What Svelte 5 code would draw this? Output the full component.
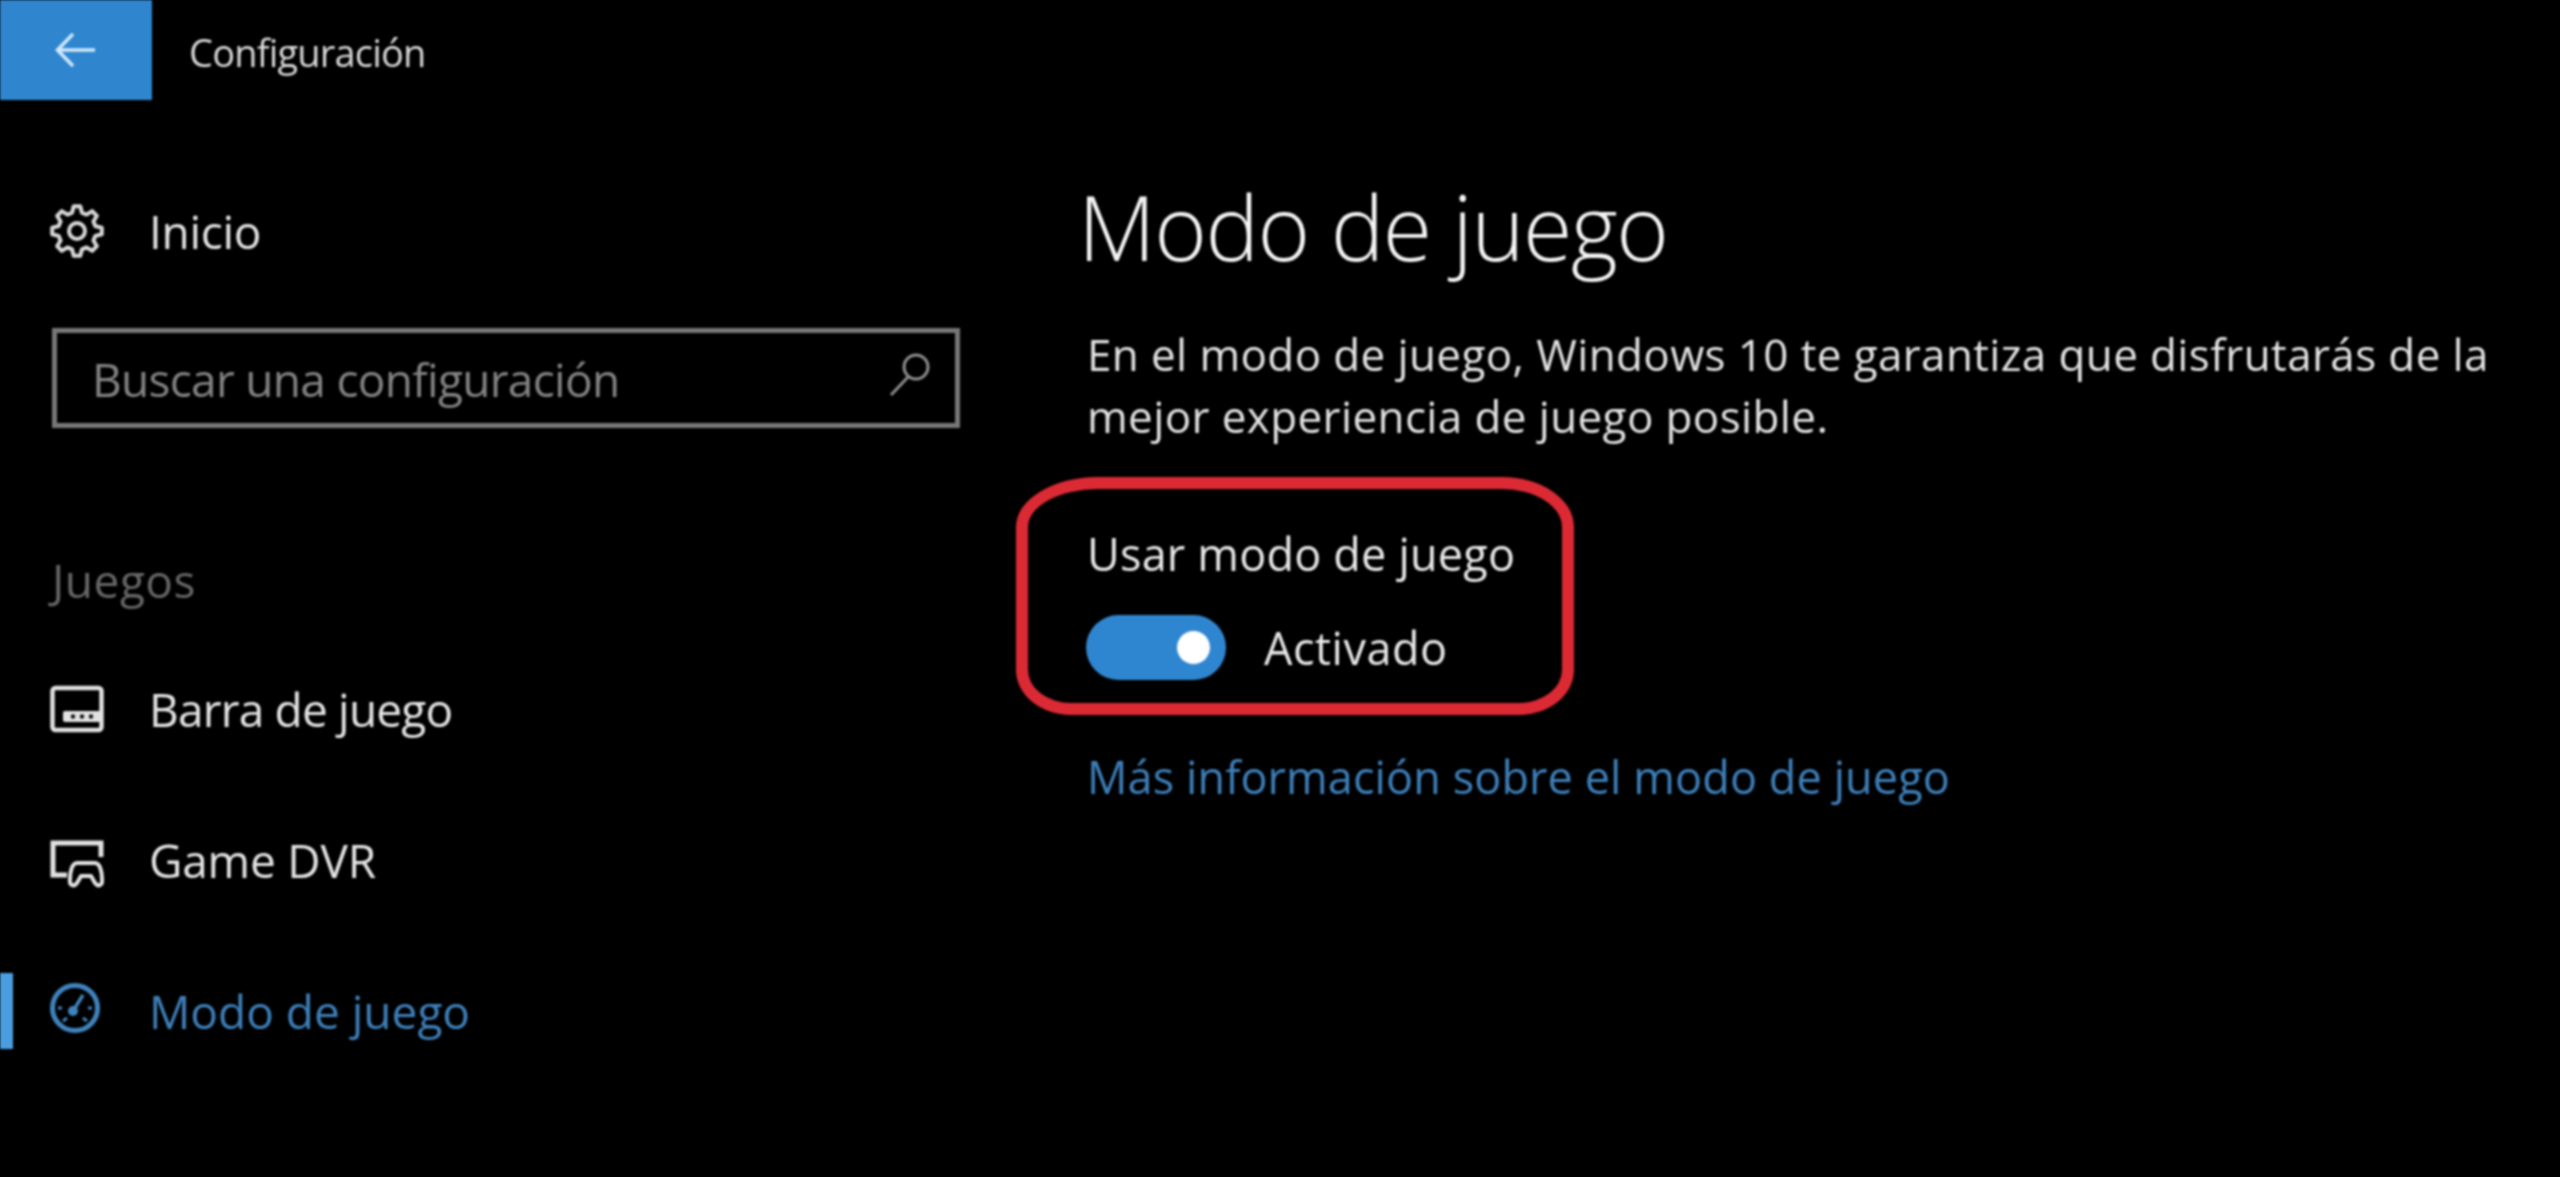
<script>
  // outline of the settings gear, teeth alternate between two radii
  function gearPath(cx, cy, teeth, outer, inner) {
    const pts = [];
    const step = (Math.PI * 2) / teeth;
    for (let i = 0; i < teeth; i++) {
      const a = i * step - Math.PI / 2;
      const w = step * 0.17;
      for (const [r, o] of [[outer, -w], [outer, w], [inner, step / 2 - w], [inner, step / 2 + w]]) {
        pts.push((cx + r * Math.cos(a + o)).toFixed(1) + ' ' + (cy + r * Math.sin(a + o)).toFixed(1));
      }
    }
    return 'M' + pts.join('L') + 'Z';
  }

  const gear = gearPath(27, 27, 8, 25, 19);
</script>

<div class="page">
  <header class="topbar">
    <div class="back">
      <svg width="40" height="36" viewBox="0 0 40 36" fill="none" stroke="#cfe8fb" stroke-width="3.5">
        <path d="M40 18H3M18 2 2.5 18 18 34" />
      </svg>
    </div>
    <span class="app-title">Configuración</span>
  </header>

  <div class="body">
    <aside class="sidebar">
      <div class="row">
        <svg class="icon" viewBox="0 0 54 54" fill="none" stroke="#d8d8d8" stroke-width="4" stroke-linejoin="round">
          <path d={gear} />
          <circle cx="27" cy="27" r="8" />
        </svg>
        <span class="label inicio">Inicio</span>
      </div>

      <div class="search">
        <span class="placeholder">Buscar una configuración</span>
        <svg class="search-icon" viewBox="0 0 42 44" fill="none" stroke="#8c8c8c" stroke-width="3">
          <circle cx="27" cy="15" r="12" />
          <path d="M19 25 2 43" />
        </svg>
      </div>

      <h2 class="group">Juegos</h2>

      <div class="row">
        <svg class="icon" viewBox="0 0 54 48" fill="none" stroke="#e2e2e2" stroke-width="4.5">
          <rect x="2.5" y="3" width="49" height="42" rx="3" />
          <rect x="13" y="26" width="38" height="11" rx="2" fill="#e2e2e2" stroke="none" />
          <circle cx="23" cy="31.5" r="2.2" fill="#111" stroke="none" />
          <circle cx="32" cy="31.5" r="2.2" fill="#111" stroke="none" />
          <circle cx="41" cy="31.5" r="2.2" fill="#111" stroke="none" />
        </svg>
        <span class="label barra">Barra de juego</span>
      </div>

      <div class="row">
        <svg class="icon dvr-icon" viewBox="0 0 54 48" fill="none" stroke="#e2e2e2" stroke-width="4.5">
          <path d="M17 35H3V3H51V17" stroke-width="5" />
          <path d="M27 23H45C50 23 52 32 52 39 53 46 48 47 45 43L41 36H31L27 43C24 47 19 46 20 39 20 32 22 23 27 23Z" stroke-width="4" stroke-linejoin="round" />
        </svg>
        <span class="label dvr">Game DVR</span>
      </div>

      <div class="row active">
        <svg class="icon gauge-icon" viewBox="0 0 54 54" fill="none" stroke="#3f83bd" stroke-width="5">
          <circle cx="26" cy="27" r="22.5" />
          <path d="M24 30 34 14" stroke-width="3.5" />
          <circle cx="24" cy="30" r="5" fill="#3f83bd" stroke="none" />
          <path d="M9 27h4M39 27h4M14 40l4-3M34 37l4 3" stroke-width="3" />
        </svg>
        <span class="label">Modo de juego</span>
      </div>
    </aside>

    <main class="content">
      <h1>Modo de juego</h1>
      <p>En el modo de juego, Windows 10 te garantiza que disfrutarás de la mejor experiencia de juego posible.</p>

      <div class="setting">
        <div class="ring"></div>
        <div class="setting-label">Usar modo de juego</div>
        <div class="toggle-row">
          <div class="toggle"><span class="knob"></span></div>
          <span class="state">Activado</span>
        </div>
      </div>

      <div class="link">Más información sobre el modo de juego</div>
    </main>
  </div>
</div>

<style>
  :global(body) {
    background: #000;
  }
  .page {
    width: 2560px;
    height: 1177px;
    overflow: hidden;
    background: #000;
    color: #e6e6e6;
    font-family: "Open Sans", "Noto Sans", sans-serif;
    filter: blur(1px);
  }
  .topbar {
    display: flex;
    align-items: center;
    height: 100px;
  }
  .back {
    width: 152px;
    height: 100px;
    background: #2f86cf;
    display: flex;
    align-items: center;
    justify-content: center;
  }
  .back svg {
    margin-right: 2px;
  }
  .app-title {
    margin-left: 37px;
    font-size: 38px;
    letter-spacing: -0.8px;
    color: #d8d8d8;
    position: relative;
    top: 2px;
  }
  .body {
    display: grid;
    grid-template-columns: 1082px 1fr;
  }
  .sidebar {
    padding-top: 55px;
  }
  .row {
    display: flex;
    align-items: center;
    gap: 45px;
    height: 151px;
    padding-left: 50px;
  }
  .icon {
    width: 54px;
    flex: none;
  }
  .dvr-icon {
    margin-top: 8px;
  }
  .gauge-icon {
    margin: -5px 1px 0 -1px;
  }
  .label {
    font-size: 46px;
    color: #e4e4e4;
  }
  .inicio {
    letter-spacing: -0.3px;
  }
  .barra {
    letter-spacing: -0.8px;
  }
  .dvr {
    letter-spacing: -0.2px;
  }
  .active {
    background: linear-gradient(#4a9ee0, #4a9ee0) left center / 13px 76px no-repeat;
  }
  .active .label {
    color: #3d7fba;
  }
  .search {
    margin: 22px 0 0 52px;
    width: 908px;
    height: 100px;
    box-sizing: border-box;
    border: 5px solid #777;
    display: flex;
    align-items: center;
    justify-content: space-between;
    padding: 0 24px 2px 35px;
  }
  .placeholder {
    font-size: 46px;
    letter-spacing: -0.7px;
    color: #828282;
    position: relative;
    top: 2px;
  }
  .search-icon {
    width: 42px;
    height: 44px;
    margin-top: -6px;
  }
  .group {
    margin: 122px 0 23px 52px;
    font-size: 46px;
    line-height: 60px;
    font-weight: 400;
    letter-spacing: 0.5px;
    color: #666;
  }
  .content {
    padding-top: 71px;
  }
  h1 {
    margin: 0 0 0 -4px;
    font-size: 90px;
    line-height: 110px;
    font-weight: 300;
    letter-spacing: -1.5px;
    color: #f4f4f4;
  }
  p {
    margin: 42px 0 0 5px;
    width: 1450px;
    font-size: 44px;
    line-height: 62px;
    letter-spacing: 0.38px;
    color: #e2e2e2;
  }
  .setting {
    position: relative;
    margin: 77px 0 0 5px;
    height: 170px;
  }
  .ring {
    position: absolute;
    left: -71px;
    top: -47px;
    width: 558px;
    height: 238px;
    box-sizing: border-box;
    border: 12px solid #dc2a35;
    border-radius: 82px 72px 55px 55px / 50px 50px 45px 45px;
  }
  .setting-label {
    font-size: 45px;
    line-height: 60px;
    letter-spacing: 0.2px;
    color: #e8e8e8;
  }
  .toggle-row {
    display: flex;
    align-items: center;
    gap: 38px;
    margin-top: 31px;
    margin-left: -1px;
  }
  .toggle {
    width: 140px;
    height: 65px;
    border-radius: 33px;
    background: #2f86d0;
    position: relative;
  }
  .knob {
    position: absolute;
    left: 91px;
    top: 16px;
    width: 33px;
    height: 33px;
    border-radius: 50%;
    background: #fff;
  }
  .state {
    font-size: 45px;
    letter-spacing: 0.5px;
    color: #e8e8e8;
  }
  .link {
    margin: 53px 0 0 5px;
    font-size: 45px;
    line-height: 60px;
    letter-spacing: 0.1px;
    color: #3d7fba;
  }
</style>
